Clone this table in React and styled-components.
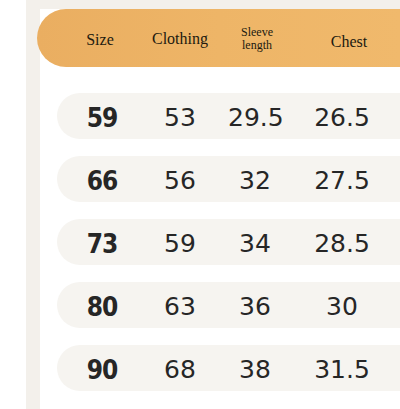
import React from "react";
import styled, { createGlobalStyle } from "styled-components";

const GlobalStyle = createGlobalStyle`
  html, body {
    margin: 0;
    padding: 0;
    background: #ffffff;
    overflow: hidden;
  }
`;

const Page = styled.div`
  width: 400px;
  height: 409px;
  padding-left: 26px;
  box-sizing: border-box;
  background: #ffffff;
`;

const Frame = styled.div`
  height: 100%;
  background: #f3f0eb;
  padding: 9px 0 0 14px;
  box-sizing: border-box;
`;

const Panel = styled.div`
  height: 100%;
  background: #ffffff;
  display: flex;
  flex-direction: column;
`;

const Header = styled.div`
  margin-left: -3px;
  height: 58px;
  border-radius: 29px 0 0 29px;
  background: linear-gradient(90deg, #eaae61 0%, #eeb567 50%, #f0b96c 100%);
  display: grid;
  grid-template-columns: 33px 60px 100px 54px 30px 70px 1fr;
  align-items: center;
  font-family: "Liberation Serif", "Times New Roman", serif;
  color: #221a10;
`;

const HeadCell = styled.div`
  grid-column: ${(p) => p.col};
  text-align: center;
  white-space: nowrap;
  font-size: ${(p) => (p.small ? "12px" : "16px")};
  line-height: ${(p) => (p.small ? "13px" : "18px")};
  margin-top: ${(p) => p.shift || 0}px;
`;

const Rows = styled.div`
  display: flex;
  flex-direction: column;
  gap: 17px;
  padding: 26px 0 0 17px;
`;

const Row = styled.div`
  height: 46px;
  border-radius: 23px 0 0 23px;
  background: #f6f4f0;
  display: grid;
  grid-template-columns: 15px 60px 96px 54px 120px 1fr;
  align-items: center;
  color: #262626;
`;

const Cell = styled.div`
  grid-column: ${(p) => p.col};
  text-align: center;
  white-space: nowrap;
  margin-top: 3px;
  font-size: ${(p) => (p.bold ? "26px" : "25px")};
  font-family: ${(p) =>
    p.bold ? '"DejaVu Sans Condensed", "DejaVu Sans", sans-serif' : '"DejaVu Sans", sans-serif'};
  font-weight: ${(p) => (p.bold ? 700 : 400)};
  letter-spacing: ${(p) => (p.bold ? "-1px" : "0")};
`;

const data = [
  ["59", "53", "29.5", "26.5"],
  ["66", "56", "32", "27.5"],
  ["73", "59", "34", "28.5"],
  ["80", "63", "36", "30"],
  ["90", "68", "38", "31.5"],
];

export default function App() {
  return (
    <>
      <GlobalStyle />
      <Page>
        <Frame>
          <Panel>
            <Header>
              <HeadCell col={2} shift={4}>Size</HeadCell>
              <HeadCell col={3} shift={2}>Clothing</HeadCell>
              <HeadCell col={4} small shift={2}>
                Sleeve
                <br />
                length
              </HeadCell>
              <HeadCell col={6} shift={7}>Chest</HeadCell>
            </Header>
            <Rows>
              {data.map((r) => (
                <Row key={r[0]}>
                  <Cell col={2} bold>{r[0]}</Cell>
                  <Cell col={3}>{r[1]}</Cell>
                  <Cell col={4}>{r[2]}</Cell>
                  <Cell col={5}>{r[3]}</Cell>
                </Row>
              ))}
            </Rows>
          </Panel>
        </Frame>
      </Page>
    </>
  );
}
